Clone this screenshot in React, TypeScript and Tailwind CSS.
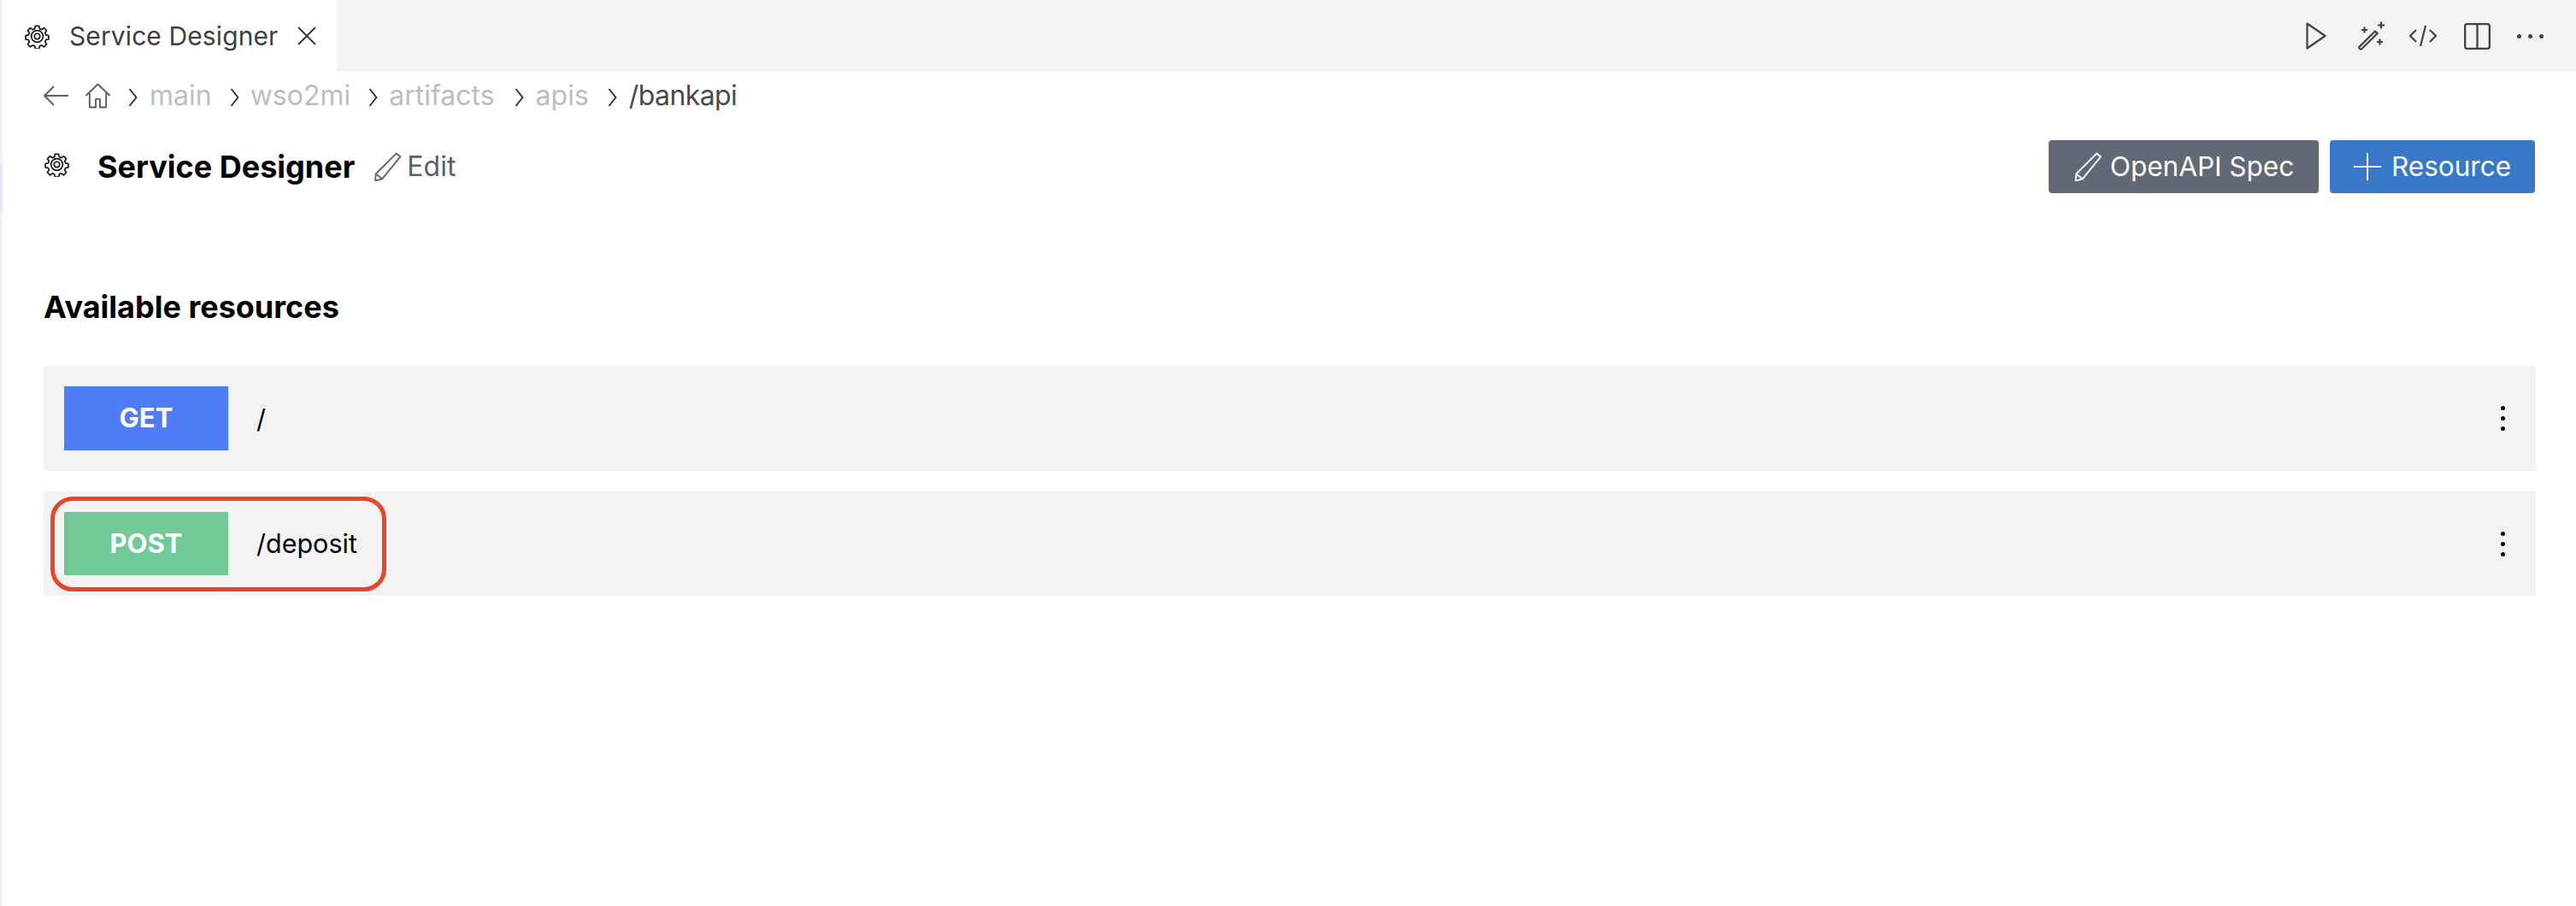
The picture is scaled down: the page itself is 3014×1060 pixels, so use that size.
import React from "react";

const Gear = ({ className = "" }: { className?: string }) => (
  <svg viewBox="0 0 32 32" className={className} fill="none" stroke="#1a1a1a" strokeWidth="1.9" strokeLinejoin="round">
    <path d="M13.6 2.6h4.8l.7 3.6 2.7 1.1 3-2.1 3.4 3.4-2.1 3 1.1 2.7 3.6.7v4.8l-3.6.7-1.1 2.7 2.1 3-3.4 3.4-3-2.1-2.7 1.1-.7 3.6h-4.8l-.7-3.6-2.7-1.1-3 2.1-3.4-3.4 2.1-3-1.1-2.7-3.6-.7v-4.8l3.6-.7 1.1-2.7-2.1-3 3.4-3.4 3 2.1 2.7-1.1z" />
    <circle cx="16" cy="16" r="7.6" />
    <circle cx="16" cy="16" r="3.6" />
  </svg>
);

const Chevron = () => (
  <svg viewBox="0 0 12 24" className="w-[13px] h-[24px] shrink-0 block" fill="none" stroke="#2b2b2b" strokeWidth="1.8">
    <path d="M2 2l8 10-8 10" />
  </svg>
);

const Pencil = ({ color, className = "" }: { color: string; className?: string }) => (
  <svg viewBox="0 0 32 32" className={className} fill="none" stroke={color} strokeWidth="1.8" strokeLinejoin="round">
    <path d="M25.5 1.5l4.5 3.5L10 29.5l-7.5 2 .5-7.5z" />
    <path d="M3 24l7 5.5" />
  </svg>
);

function Crumb({ label, dark }: { label: string; dark?: boolean }) {
  return <span className={dark ? "text-[#4a4a4a] tracking-[-0.6px]" : "text-[#bdbdbd]"}>{label}</span>;
}

function Row({ method, path, color, h, badgeH }: { method: string; path: string; color: string; h: string; badgeH: string }) {
  return (
    <div className={`flex items-center bg-[#f3f3f3] pl-[24px] pr-[32px] ${h}`}>
      <div className={`w-[192px] flex items-center justify-center text-white font-bold text-[31px] ${badgeH} ${color}`}>
        {method}
      </div>
      <div className="ml-[33px] text-[30.5px] text-black">{path}</div>
      <div className="ml-auto flex flex-col gap-[7px] mr-[4px]">
        <span className="w-[5px] h-[5px] rounded-full bg-black" />
        <span className="w-[5px] h-[5px] rounded-full bg-black" />
        <span className="w-[5px] h-[5px] rounded-full bg-black" />
      </div>
    </div>
  );
}

export default function App() {
  return (
    <div className="relative h-[1060px] w-full bg-white flex font-['Inter',sans-serif] overflow-hidden">
      <div className="w-[3px] shrink-0 bg-[#f3f3f3] flex flex-col">
        <div className="h-[190px]" />
        <div className="h-[60px] bg-[#e6e8f5]" />
      </div>
      <div className="flex-1 flex flex-col min-w-0">
        <div className="h-[84px] bg-[#f3f3f3] flex items-stretch shrink-0">
          <div className="w-[391px] bg-white flex items-center pl-[26px]">
            <Gear className="w-[29px] h-[29px]" />
            <span className="ml-[23px] text-[30px] text-[#3f3f3f] tracking-[0.1px]">Service Designer</span>
            <svg viewBox="0 0 24 24" className="ml-[22px] w-[24px] h-[24px]" fill="none" stroke="#333" strokeWidth="1.8">
              <path d="M2 2l20 20M22 2L2 22" />
            </svg>
          </div>
          <div className="ml-auto flex items-center text-[#424242] pr-[38px]">
            <svg viewBox="0 0 24 32" className="w-[24px] h-[32px] -translate-x-[2px]" fill="none" stroke="#424242" strokeWidth="2.2" strokeLinejoin="round">
              <path d="M1.5 1.5L22.5 16 1.5 30.5z" />
            </svg>
            <svg viewBox="0 0 34 34" className="ml-[33px] w-[34px] h-[34px]" fill="none" stroke="#424242" strokeWidth="2.2">
              <path d="M22 11.5l2.6 2.6L6.5 32a1.8 1.8 0 0 1-2.6-2.6z" />
              <path d="M6 10h7M9.5 6.5v7M25 4.5h8M29 .5v8M24 24h7M27.5 20.5v7" />
            </svg>
            <svg viewBox="0 0 34 26" className="ml-[27px] w-[34px] h-[26px]" fill="none" stroke="#424242" strokeWidth="2.2">
              <path d="M9 6L2 13l7 7M25 6l7 7-7 7M20 1l-6 24" />
            </svg>
            <svg viewBox="0 0 32 32" className="ml-[31px] w-[31px] h-[31px]" fill="none" stroke="#424242" strokeWidth="2.4">
              <rect x="1.2" y="1.2" width="29.6" height="29.6" rx="2.5" />
              <path d="M16 1v30" />
            </svg>
            <div className="ml-[31px] flex gap-[8px]">
              <span className="w-[5px] h-[5px] rounded-full bg-[#424242]" />
              <span className="w-[5px] h-[5px] rounded-full bg-[#424242]" />
              <span className="w-[5px] h-[5px] rounded-full bg-[#424242]" />
            </div>
          </div>
        </div>

        <div className="h-[30px] mt-[13px] flex items-center pl-[47px] text-[32px] leading-none shrink-0">
          <svg viewBox="0 0 30 26" className="w-[30px] h-[26px]" fill="none" stroke="#5f5f5f" strokeWidth="2">
            <path d="M30 13H2M13 2L2 13l11 11" />
          </svg>
          <svg viewBox="0 0 32 32" className="ml-[19px] w-[31px] h-[32px]" fill="none" stroke="#5f5f5f" strokeWidth="2" strokeLinejoin="round">
            <path d="M1.5 16L16 2l14.5 14M6 13v17h7.5V20h5v10H26V13" />
          </svg>
          <span className="ml-[19px] mt-[3px]"><Chevron /></span>
          <span className="ml-[13px]"><Crumb label="main" /></span>
          <span className="ml-[20px] mt-[3px]"><Chevron /></span>
          <span className="ml-[12px]"><Crumb label="wso2mi" /></span>
          <span className="ml-[20px] mt-[3px]"><Chevron /></span>
          <span className="ml-[12px]"><Crumb label="artifacts" /></span>
          <span className="ml-[22px] mt-[3px]"><Chevron /></span>
          <span className="ml-[13px]"><Crumb label="apis" /></span>
          <span className="ml-[21px] mt-[3px]"><Chevron /></span>
          <span className="ml-[13px]"><Crumb label="/bankapi" dark /></span>
        </div>

        <div className="flex items-center mt-[37px] h-[62px] pl-[49px] pr-[48px] shrink-0">
          <Gear className="w-[29px] h-[29px] -mt-[6px]" />
          <span className="ml-[33px] text-[36px] font-bold text-black">Service Designer</span>
          <Pencil color="#666666" className="ml-[21px] w-[35px] h-[34px]" />
          <span className="ml-[5px] text-[32px] text-[#5f5f5f]">Edit</span>
          <div className="ml-auto flex gap-[13px]">
            <div className="w-[316px] h-[62px] rounded-[4px] bg-[#616977] flex items-center justify-center text-white text-[31.5px]">
              <Pencil color="#ffffff" className="w-[34px] h-[34px] mr-[9px]" />
              OpenAPI Spec
            </div>
            <div className="w-[240px] h-[62px] rounded-[4px] bg-[#3778c9] flex items-center justify-center text-white text-[31.5px]">
              <svg viewBox="0 0 32 32" className="w-[32px] h-[32px] mr-[12px]" fill="none" stroke="#fff" strokeWidth="2">
                <path d="M0 16h32M16 0v32" />
              </svg>
              Resource
            </div>
          </div>
        </div>

        <div className="flex-1 flex flex-col pl-[48px] pr-[47px]">
          <h2 className="mt-[111px] text-[36px] leading-[44px] font-bold text-black">Available resources</h2>
          <div className="mt-[47px] flex flex-col gap-[24px]">
            <Row method="GET" path="/" color="bg-[#4f7cf7]" h="h-[123px]" badgeH="h-[75px]" />
            <Row method="POST" path="/deposit" color="bg-[#71c997]" h="h-[122px]" badgeH="h-[74px]" />
          </div>
        </div>
      </div>
      <div className="absolute left-[59px] top-[581px] w-[393px] h-[111px] border-[5px] border-[#ec4426] rounded-[26px] pointer-events-none" />
    </div>
  );
}
